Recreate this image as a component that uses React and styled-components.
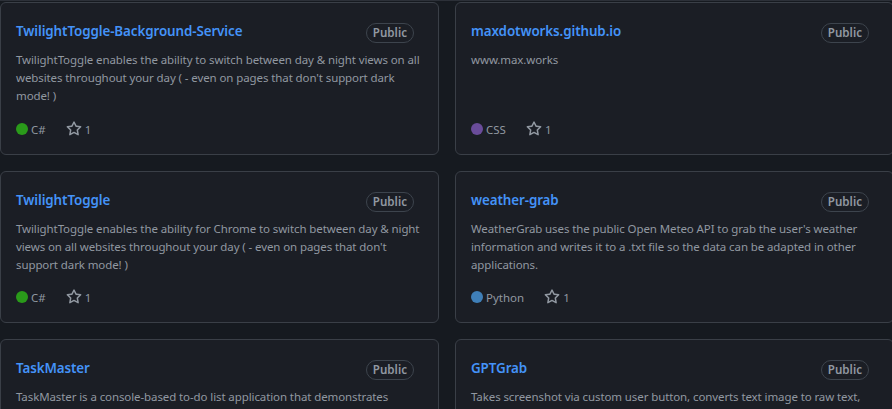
import React from "react";
import styled, { createGlobalStyle } from "styled-components";

const GlobalStyle = createGlobalStyle`
  html, body {
    margin: 0;
    padding: 0;
    background: #161a20;
    overflow: hidden;
  }
  body {
    font-family: "Noto Sans", "Liberation Sans", sans-serif;
    -webkit-font-smoothing: antialiased;
  }
`;

const repos = [
  {
    name: "TwilightToggle-Background-Service",
    desc: [
      "TwilightToggle enables the ability to switch between day & night views on all",
      "websites throughout your day ( - even on pages that don't support dark",
      "mode! )",
    ],
    lang: "C#",
    color: "#2a9a1a",
    stars: 1,
  },
  {
    name: "maxdotworks.github.io",
    desc: ["www.max.works"],
    lang: "CSS",
    color: "#6a4c9a",
    stars: 1,
  },
  {
    name: "TwilightToggle",
    desc: [
      "TwilightToggle enables the ability for Chrome to switch between day & night",
      "views on all websites throughout your day ( - even on pages that don't",
      "support dark mode! )",
    ],
    lang: "C#",
    color: "#2a9a1a",
    stars: 1,
  },
  {
    name: "weather-grab",
    desc: [
      "WeatherGrab uses the public Open Meteo API to grab the user's weather",
      "information and writes it to a .txt file so the data can be adapted in other",
      "applications.",
    ],
    lang: "Python",
    color: "#3f7fb8",
    stars: 1,
  },
  {
    name: "TaskMaster",
    desc: [
      "TaskMaster is a console-based to-do list application that demonstrates",
      "core programming concepts in C#.",
    ],
    lang: "C#",
    color: "#2a9a1a",
    stars: 1,
  },
  {
    name: "GPTGrab",
    desc: [
      "Takes screenshot via custom user button, converts text image to raw text,",
      "and sends it to ChatGPT for a response.",
    ],
    lang: "Python",
    color: "#3f7fb8",
    stars: 1,
  },
];

function StarIcon() {
  return (
    <svg width="16" height="16" viewBox="0 0 16 16" fill="currentColor" aria-hidden="true">
      <path d="M8 .25a.75.75 0 0 1 .673.418l1.882 3.815 4.21.612a.75.75 0 0 1 .416 1.279l-3.046 2.97.719 4.192a.751.751 0 0 1-1.088.791L8 12.347l-3.766 1.98a.75.75 0 0 1-1.088-.79l.72-4.194L.818 6.374a.75.75 0 0 1 .416-1.28l4.21-.611L7.327.668A.75.75 0 0 1 8 .25Zm0 2.445L6.615 5.5a.75.75 0 0 1-.564.41l-3.097.45 2.24 2.184a.75.75 0 0 1 .216.664l-.528 3.084 2.769-1.456a.75.75 0 0 1 .698 0l2.77 1.456-.53-3.084a.75.75 0 0 1 .216-.664l2.24-2.183-3.096-.45a.75.75 0 0 1-.564-.41L8 2.694Z" />
    </svg>
  );
}

function PinnedCard({ repo }) {
  return (
    <Card>
      <TitleRow>
        <RepoLink href="#">{repo.name}</RepoLink>
        <Badge>Public</Badge>
      </TitleRow>
      <Description>
        {repo.desc.map((line, i) => (
          <Line key={i}>{line}</Line>
        ))}
      </Description>
      <Footer>
        <Language>
          <Dot $color={repo.color} />
          {repo.lang}
        </Language>
        <Stars href="#">
          <StarIcon />
          {repo.stars}
        </Stars>
      </Footer>
    </Card>
  );
}

export default function App() {
  return (
    <Page>
      <GlobalStyle />
      <Grid>
        {repos.map((r) => (
          <PinnedCard key={r.name} repo={r} />
        ))}
      </Grid>
    </Page>
  );
}

const Page = styled.div`
  border-top: 1px solid #2c3038;
  padding-top: 1px;
  width: 920px;
`;

const Grid = styled.ol`
  list-style: none;
  margin: 0;
  padding: 0;
  display: grid;
  grid-template-columns: 439px 439px;
  grid-auto-rows: auto;
  column-gap: 16px;
  row-gap: 16px;

  & > li:nth-child(-n + 2) {
    height: 153px;
  }
`;

const Card = styled.li`
  box-sizing: border-box;
  height: 152px;
  display: flex;
  flex-direction: column;
  padding: 16px 16px 16px 15px;
  background: #1b1e25;
  border: 1px solid #3a3f47;
  border-radius: 6px;
`;

const TitleRow = styled.div`
  display: flex;
  align-items: center;
  justify-content: space-between;
  height: 24px;
  padding-right: 8px;
`;

const RepoLink = styled.a`
  color: #4493f8;
  font-size: 13.4px;
  font-weight: 600;
  letter-spacing: -0.1px;
  text-decoration: none;
  line-height: 20px;
`;

const Badge = styled.span`
  box-sizing: border-box;
  display: inline-flex;
  align-items: center;
  height: 20px;
  padding: 0 6px;
  margin-top: 3px;
  border: 1px solid #3d444d;
  border-radius: 2em;
  color: #9198a1;
  font-size: 11.6px;
  font-weight: 600;
`;

const Description = styled.p`
  flex: 1;
  margin: 8px 0 14px;
  color: #9198a1;
  font-size: 11.5px;
  letter-spacing: -0.1px;
  line-height: 18px;
`;

const Line = styled.span`
  display: block;
  white-space: nowrap;
`;

const Footer = styled.p`
  display: flex;
  align-items: center;
  margin: 0;
  height: 18px;
  color: #9198a1;
  font-size: 11.5px;
`;

const Language = styled.span`
  display: inline-flex;
  align-items: center;
  margin-right: 20px;
`;

const Dot = styled.span`
  width: 12px;
  height: 12px;
  border-radius: 50%;
  background: ${(p) => p.$color};
  margin-right: 3px;
`;

const Stars = styled.a`
  display: inline-flex;
  align-items: center;
  gap: 3px;
  color: #9198a1;
  text-decoration: none;

  svg {
    color: #9198a1;
  }
`;
